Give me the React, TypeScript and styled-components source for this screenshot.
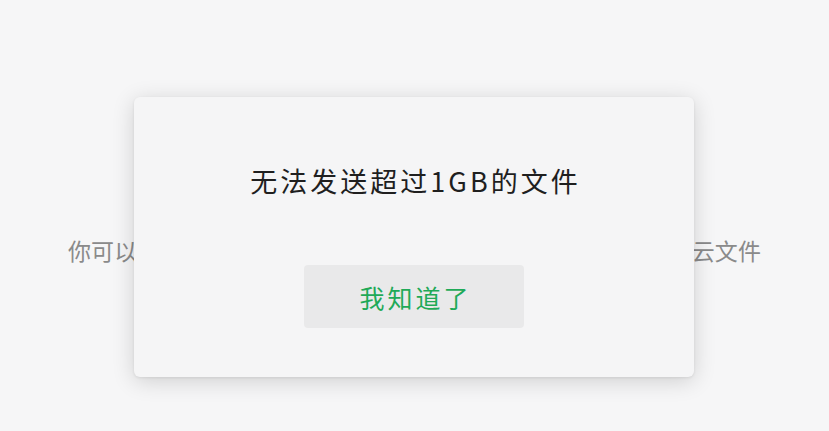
import React from "react";
import styled, { createGlobalStyle } from "styled-components";

const GlobalStyle = createGlobalStyle`
    html, body {
        margin: 0;
        padding: 0;
        background: #f6f6f7;
        font-family: "Noto Sans CJK SC", "Noto Sans", sans-serif;
    }
`;

const SPage = styled.div`
    position: relative;
    width: 829px;
    height: 431px;
    overflow: hidden;
    background: #f6f6f7;
`;

const SHint = styled.div`
    padding-top: 233px;
    text-align: center;
    font-size: 23px;
    line-height: 34px;
    letter-spacing: 0.1px;
    color: #8a8a8a;
    white-space: nowrap;
`;

const SMask = styled.div`
    position: absolute;
    inset: 0;
`;

const SDialog = styled.div`
    position: absolute;
    left: 134px;
    top: 97px;
    width: 560px;
    height: 280px;
    box-sizing: border-box;
    border-radius: 6px;
    background: #f5f5f6;
    box-shadow: 0 4px 22px rgba(0, 0, 0, 0.16), 0 1px 3px rgba(0, 0, 0, 0.08);
    display: flex;
    flex-direction: column;
    align-items: center;
    padding-top: 64px;
`;

const STitle = styled.div`
    font-size: 27px;
    line-height: 40px;
    color: #1f1f1f;
    letter-spacing: 3px;
    padding-left: 3px;
`;

const SButton = styled.button`
    margin-top: 64px;
    width: 220px;
    height: 63px;
    border: none;
    outline: none;
    border-radius: 4px;
    background: #e9e9ea;
    color: #1faa58;
    font-family: inherit;
    font-size: 25px;
    letter-spacing: 3px;
    padding: 0 0 0 3px;
    cursor: pointer;
`;

export default function App() {
    return (
        <>
            <GlobalStyle />
            <SPage>
                <SHint>你可以使用文件传输助手或将文件上传至微云后在聊天中分享云文件</SHint>
                <SMask>
                    <SDialog>
                        <STitle>无法发送超过1GB的文件</STitle>
                        <SButton>我知道了</SButton>
                    </SDialog>
                </SMask>
            </SPage>
        </>
    );
}
